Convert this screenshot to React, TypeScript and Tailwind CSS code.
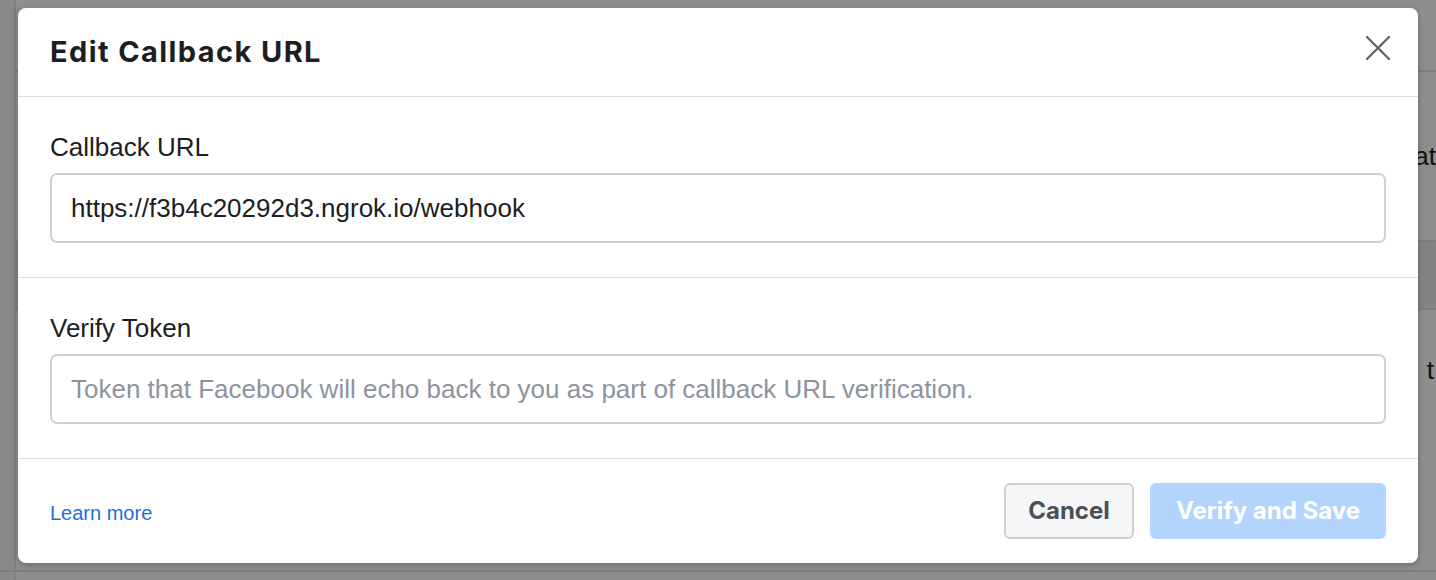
import { useState } from "react";

function CloseIcon() {
  return (
    <svg width="24" height="24" viewBox="0 0 24 24" fill="none">
      <path d="M1 1L23 23M23 1L1 23" stroke="#606770" strokeWidth="2.4" strokeLinecap="round" />
    </svg>
  );
}

function Field({
  label,
  value,
  placeholder,
}: {
  label: string;
  value?: string;
  placeholder?: string;
}) {
  const [v, setV] = useState(value ?? "");
  return (
    <div className="px-8 pt-[34px] pb-[34px] border-b border-[#dadde1]">
      <div className="text-[26px] leading-[32px] text-[#1c1e21] mb-[10px]">{label}</div>
      <input
        value={v}
        onChange={(e) => setV(e.target.value)}
        placeholder={placeholder}
        className="block w-full h-[70px] px-[19px] rounded-[7px] border-2 border-[#ccd0d5] bg-white text-[26px] text-[#1c1e21] placeholder:text-[#8d949e] outline-none"
      />
    </div>
  );
}

export default function App() {
  return (
    <div
      className="relative h-[580px] w-full overflow-hidden bg-[#8e8e8e]"
      style={{ fontFamily: '"Liberation Sans", Arial, sans-serif' }}
    >
      {/* Dimmed page behind the dialog */}
      <div className="h-[72px] border-b-2 border-[#7c7c7c]" />
      <div className="h-[168px] flex items-center justify-end">
        <span className="text-[26px] leading-none text-[#111]">at</span>
      </div>
      <div className="h-[70px] bg-[#838383] border-y-2 border-[#7c7c7c]" />
      <div className="h-[120px] flex items-center justify-end">
        <span className="text-[26px] text-[#111] mr-[2px]">t</span>
      </div>
      <div className="absolute left-0 top-0 bottom-0 w-[16px] bg-[#898989] border-r-2 border-[#7f7f7f]" />
      <div className="absolute left-0 right-0 bottom-[8px] h-[2px] bg-[#7c7c7c]" />

      {/* Dialog */}
      <div className="absolute left-[18px] top-[8px] w-[1400px] bg-white rounded-[8px] shadow-[0_2px_6px_rgba(0,0,0,0.25)]">
        <div className="h-[89px] flex items-center justify-between pl-8 pr-[28px] border-b border-[#dadde1]">
          <h1
            className="text-[29px] font-bold text-[#1c1e21] tracking-[1.4px]"
            style={{ fontFamily: "Inter, sans-serif" }}
          >
            Edit Callback URL
          </h1>
          <button className="mt-[-8px] p-0">
            <CloseIcon />
          </button>
        </div>

        <Field label="Callback URL" value="https://f3b4c20292d3.ngrok.io/webhook" />
        <Field
          label="Verify Token"
          placeholder="Token that Facebook will echo back to you as part of callback URL verification."
        />

        <div className="h-[104px] flex items-center justify-between px-8">
          <a className="mt-[3px] text-[20px] text-[#216fdb] cursor-pointer">Learn more</a>
          <div className="flex items-center gap-[16px]">
            <button
              className="h-[56px] w-[130px] rounded-[6px] border-2 border-[#ccd0d5] bg-[#f5f6f7] text-[24px] font-bold text-[#4b4f56]"
              style={{ fontFamily: "Inter, sans-serif" }}
            >
              Cancel
            </button>
            <button
              className="h-[56px] w-[236px] rounded-[6px] bg-[#b3d5fd] text-[24px] font-bold text-white"
              style={{ fontFamily: "Inter, sans-serif" }}
            >
              Verify and Save
            </button>
          </div>
        </div>
      </div>
    </div>
  );
}
